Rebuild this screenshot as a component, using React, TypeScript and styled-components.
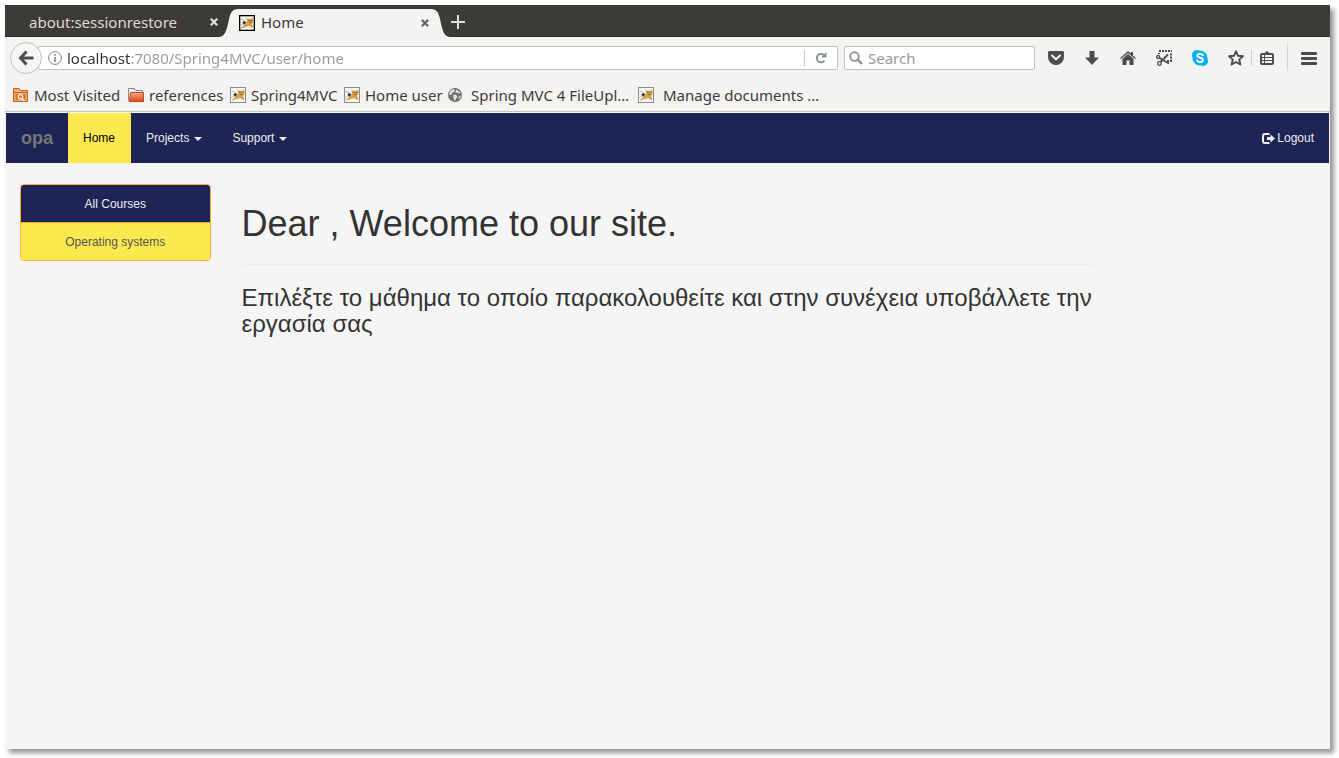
import React from "react";
import styled, { createGlobalStyle, css } from "styled-components";

const chromeFont = `"Noto Sans", "Open Sans", sans-serif`;
const pageFont = `"Liberation Sans", Arial, sans-serif`;

const GlobalStyle = createGlobalStyle`
  *, *::before, *::after { box-sizing: border-box; }
  body { margin: 0; background: #fff; font-family: ${pageFont}; }
  button { border: 0; padding: 0; background: none; font: inherit; color: inherit; cursor: pointer; }
  a { color: inherit; text-decoration: none; }
  svg { display: block; flex: none; }
`;

const Screen = styled.div`
  display: flex;
  height: 100vh;
  padding: 5px 9px 9px 5px;
`;

const BrowserWindow = styled.div`
  flex: 1;
  min-width: 0;
  display: flex;
  flex-direction: column;
  background: #f5f5f5;
  box-shadow: 4px 4px 5px rgba(0, 0, 0, 0.42);
`;

/* Tab strip */
const TabStrip = styled.div`
  display: flex;
  align-items: flex-end;
  height: 32px;
  background: #3c3b37;
  border-bottom: 1px solid #2f2e2a;
  font: 15px/20px ${chromeFont};
`;

const IdleTab = styled.div`
  display: flex;
  align-items: center;
  justify-content: space-between;
  width: 214px;
  height: 28px;
  padding-left: 24px;
  color: #dfdbd2;
`;

const ActiveTab = styled.div`
  display: flex;
  height: 28px;
  margin-bottom: -1px;
  color: #3c3c3c;
`;

const ActiveTabBody = styled.div`
  display: flex;
  align-items: center;
  width: 191px;
  background: #f4f3f1;
`;

const TabTitle = styled.span`
  flex: 1;
  padding: 0 0 2px 6px;
`;

const TabClose = styled.button`
  display: grid;
  place-items: center;
  width: 10px;
  height: 16px;
`;

const NewTab = styled.button`
  display: grid;
  place-items: center;
  width: 16px;
  height: 28px;
`;

/* Navigation toolbar */
const Toolbar = styled.div`
  display: flex;
  align-items: center;
  height: 42px;
  padding-left: 5px;
  background: #f4f3f1;
  font: 15px/20px ${chromeFont};
`;

const BackButton = styled.button`
  display: grid;
  place-items: center;
  flex: none;
  width: 32px;
  height: 32px;
  margin-right: -4px;
  z-index: 1;
  border: 1px solid #c3c1be;
  border-radius: 50%;
  background: #f6f5f4;
`;

const field = css`
  display: flex;
  align-items: center;
  height: 24px;
  border: 1px solid #c3c1be;
  border-radius: 2px;
  background: #fff;
`;

const AddressField = styled.label`
  ${field}
  flex: 1;
  min-width: 0;
  padding-left: 9px;
`;

const SearchField = styled.label`
  ${field}
  width: 191px;
  margin: 0 3px 0 6px;
  padding-left: 4px;
`;

const FieldInput = styled.input`
  flex: 1;
  min-width: 0;
  height: 22px;
  margin-left: 5px;
  padding: 0;
  border: 0;
  outline: 0;
  background: transparent;
  color: #999;
  font: inherit;
  &::placeholder { color: #999; opacity: 1; }
`;

/* The host name is dark, the rest of the address is grey. */
const AddressInput = styled(FieldInput)`
  background: linear-gradient(90deg, #333 64px, #999 64px);
  -webkit-background-clip: text;
  background-clip: text;
  -webkit-text-fill-color: transparent;
`;

const ReloadButton = styled.button`
  display: grid;
  place-items: center;
  width: 33px;
  height: 16px;
  border-left: 1px solid #c8c8c8;
`;

const ToolButton = styled.button<{ $width?: number }>`
  display: grid;
  place-items: center;
  flex: none;
  width: ${(p) => p.$width ?? 36}px;
  height: 32px;
  color: #4c4c4c;
`;

const Separator = styled.span`
  width: 1px;
  height: 16px;
  margin-left: -3px;
  background: #cfcdca;
`;

const TallSeparator = styled.span`
  width: 1px;
  height: 36px;
  margin-left: 5px;
  background: linear-gradient(transparent, #d0cecb 30%, #d0cecb 70%, transparent);
`;

/* Bookmarks */
const BookmarkBar = styled.nav`
  display: flex;
  align-items: center;
  height: 33px;
  padding: 0 8px;
  background: #f4f3f1;
  border-bottom: 1px solid #c4c4bc;
  color: #3c3c3c;
  font: 15px/20px ${chromeFont};
`;

const Bookmark = styled.a<{ $width: number; $gap: number }>`
  display: flex;
  align-items: center;
  flex: none;
  gap: ${(p) => p.$gap}px;
  width: ${(p) => p.$width}px;
  white-space: nowrap;
`;

/* Web page */
const Page = styled.div`
  flex: 1;
  padding: 0 1px;
  border-top: 1px solid #f8f8f6;
  color: #333;
  font: 12px/17px ${pageFont};
`;

const Navbar = styled.nav`
  display: flex;
  height: 50px;
  background: #1e2455;
  color: #eee;
`;

const Brand = styled.a`
  padding: 15px;
  color: #777;
  font-size: 18px;
  font-weight: bold;
  line-height: 20px;
`;

const NavLink = styled.a<{ $active?: boolean }>`
  display: flex;
  align-items: center;
  padding: 0 15px;
  ${(p) => p.$active && css`padding-right: 16px; background: #fce94f; color: #000;`}
`;

const NavToggle = styled.button`
  display: flex;
  align-items: center;
  gap: 5px;
  padding: 0 15px;
`;

const Caret = styled.span`
  margin-top: 2px;
  border: 4px solid transparent;
  border-top-color: #eee;
  border-bottom: 0;
`;

const LogoutLink = styled(NavLink)`
  gap: 2px;
  margin-left: auto;
`;

const Columns = styled.div`
  display: grid;
  grid-template-columns: 2fr 8fr 2fr;
  padding-top: 21px;
`;

const Sidebar = styled.aside`
  padding: 0 16px 0 14px;
`;

const CourseList = styled.div`
  border: 1px solid #ffab3a;
  border-radius: 4px;
  overflow: hidden;
  text-align: center;
`;

const Course = styled.a<{ $selected?: boolean }>`
  display: block;
  padding: 11px 15px 9px;
  background: ${(p) => (p.$selected ? "#1e2455" : "#fce94f")};
  color: ${(p) => (p.$selected ? "#eee" : "#555")};
  & + & { border-top: 1px solid #ffab3a; }
`;

const Main = styled.main`
  padding: 20px 15px 0;
`;

const Title = styled.h1`
  margin: 0 0 20px;
  padding-bottom: 20px;
  border-bottom: 1px solid #eee;
  font-size: 36px;
  font-weight: normal;
  line-height: 40px;
`;

const Lead = styled.h3`
  margin: 0;
  font-size: 24px;
  font-weight: normal;
  line-height: 26px;
`;

const CloseIcon = ({ color }: { color: string }) => (
  <svg width="8" height="8" viewBox="0 0 8 8" stroke={color} strokeWidth="2.2">
    <path d="M0.8 0.8 7.2 7.2M7.2 0.8 0.8 7.2" />
  </svg>
);

const TabCurve = ({ flip = false }: { flip?: boolean }) => (
  <svg width="20" height="28" viewBox="0 0 20 28">
    <path
      transform={flip ? "translate(20 0) scale(-1 1)" : undefined}
      fill="#f4f3f1"
      d="M0 28C6 27.500 7 22 9 15C11 4.500 12 0 20 0V28Z"
    />
  </svg>
);

const TomcatIcon = ({ framed = false }: { framed?: boolean }) => (
  <svg width="16" height="16" viewBox="0 0 16 16">
    <rect x="0.5" y="0.5" width="15" height="15" fill="#f6f6f4" stroke={framed ? "#000" : "#8d8d8d"} strokeWidth={framed ? 1.6 : 1} />
    <path d="M1.500 5C2.500 3.800 4.500 4.500 5.500 6.500M1.500 10.500C3 9 4 8.500 5 8.500" fill="none" stroke="#999" strokeWidth="0.800" />
    <path d="M3.500 7 5.500 6 7.500 7.500 5 10Z" fill="#333" />
    <path d="M7.500 2.800 9 3.800H12.500L14.500 2.500V7L13 9 14.500 12.500 13 13 10.500 11 6.500 12 2 13.800 2.500 12.300 5.500 10 8 7.500Z" fill="#d4a04a" />
    <path d="M9.300 5.500h1.200M12 5.500h1.200M10.500 7.500h1.700" stroke="#5b431a" strokeWidth="0.900" />
  </svg>
);

const VisitedIcon = () => (
  <svg width="16" height="16" viewBox="0 0 16 16">
    <path d="M0.500 14.500V1.500H6L7.500 3.500H14.500V14.500Z" fill="#f0b078" stroke="#c8601a" />
    <path d="M1 5.500H14" stroke="#c8601a" />
    <rect x="2.500" y="7" width="10" height="6" fill="#d9731f" />
    <circle cx="7.500" cy="9.800" r="2.300" fill="#e8853a" stroke="#fff" strokeWidth="1.100" />
    <path d="M9.200 11.500 11.500 14" stroke="#fff" strokeWidth="1.200" />
  </svg>
);

const FolderIcon = () => (
  <svg width="16" height="16" viewBox="0 0 16 16">
    <defs>
      <linearGradient id="folder" x1="0" y1="0" x2="0" y2="1">
        <stop offset="0" stopColor="#f6a983" />
        <stop offset="1" stopColor="#dc4a17" />
      </linearGradient>
    </defs>
    <path d="M0.500 13.500V1.500H6.500L8 3.500H14.500V13.500Z" fill="#eee" stroke="#8a8580" />
    <path d="M1.500 14.500 2.500 5.500H15.500V14.500Z" fill="url(#folder)" stroke="#c9481a" />
  </svg>
);

const GlobeIcon = () => (
  <svg width="16" height="16" viewBox="0 0 16 16">
    <circle cx="8" cy="8" r="7" fill="#6e6e6e" />
    <path d="M3 4 6 2 8 3 7 5 5 6 4.500 8 2 8ZM9 2.500 12 4 13.500 6 12 6.500 10 5.500 8.500 6ZM6 8 8.500 7.500 10.500 9.500 9 12 7.500 14 6.500 11ZM12 9 14 8.500 13 11.500 11.500 12Z" fill="#dedede" />
  </svg>
);

const bookmarks = [
  { text: "Most Visited", icon: <VisitedIcon />, width: 115, gap: 5 },
  { text: "references", icon: <FolderIcon />, width: 102, gap: 5 },
  { text: "Spring4MVC", icon: <TomcatIcon />, width: 114, gap: 5 },
  { text: "Home user", icon: <TomcatIcon />, width: 103, gap: 5 },
  { text: "Spring MVC 4 FileUpl…", icon: <GlobeIcon />, width: 191, gap: 8 },
  { text: "Manage documents …", icon: <TomcatIcon />, width: 180, gap: 9 },
];

export default function App() {
  return (
    <Screen>
      <GlobalStyle />
      <BrowserWindow>
        <TabStrip>
          <IdleTab>
            <span>about:sessionrestore</span>
            <TabClose aria-label="Close tab"><CloseIcon color="#e6e3dc" /></TabClose>
          </IdleTab>
          <ActiveTab>
            <TabCurve />
            <ActiveTabBody>
              <TomcatIcon framed />
              <TabTitle>Home</TabTitle>
              <TabClose aria-label="Close tab"><CloseIcon color="#666" /></TabClose>
            </ActiveTabBody>
            <TabCurve flip />
          </ActiveTab>
          <NewTab aria-label="New tab">
            <svg width="14" height="14" viewBox="0 0 14 14" stroke="#e2dfd8" strokeWidth="2"><path d="M7 0V14M0 7H14" /></svg>
          </NewTab>
        </TabStrip>

        <Toolbar>
          <BackButton aria-label="Back">
            <svg width="16" height="16" viewBox="0 0 16 16" fill="none" stroke="#4c4c4c" strokeWidth="3"><path d="M2.500 8H15.500M8.500 1.500 2.500 8 8.500 14.500" /></svg>
          </BackButton>
          <AddressField>
            <svg width="14" height="14" viewBox="0 0 14 14" fill="none" stroke="#808080"><circle cx="7" cy="7" r="6.400" /><path d="M7 6V11M7 3V4.800" strokeWidth="1.600" /></svg>
            <AddressInput aria-label="Address" defaultValue="localhost:7080/Spring4MVC/user/home" />
            <ReloadButton aria-label="Reload">
              <svg width="12" height="12" viewBox="0 0 12 12"><path d="M9.500 8.500A4.200 4.200 0 1 1 8.800 2.900" fill="none" stroke="#8694a0" strokeWidth="2" /><path d="M11.500 0V5.500H6Z" fill="#8694a0" /></svg>
            </ReloadButton>
          </AddressField>
          <SearchField>
            <svg width="14" height="14" viewBox="0 0 14 14" fill="none" stroke="#8f8f8f"><circle cx="5.500" cy="5.500" r="4.300" strokeWidth="1.800" /><path d="M8.500 8.500 13 13" strokeWidth="2.400" /></svg>
            <FieldInput aria-label="Search" placeholder="Search" />
          </SearchField>
          <ToolButton aria-label="Pocket">
            <svg width="16" height="14" viewBox="0 0 16 14"><path d="M1.500 0H14.500Q16 0 16 1.500V6A8 8 0 0 1 0 6V1.500Q0 0 1.500 0Z" fill="currentColor" /><path d="M4 4.500 8 8.300 12 4.500" fill="none" stroke="#f4f3f1" strokeWidth="2" strokeLinecap="round" /></svg>
          </ToolButton>
          <ToolButton aria-label="Downloads">
            <svg width="14" height="14" viewBox="0 0 14 14" fill="currentColor"><path d="M4.500 0H9.500V6.500H14L7 14 0 6.500H4.500Z" /></svg>
          </ToolButton>
          <ToolButton aria-label="Home page">
            <svg width="16" height="14" viewBox="0 0 16 14" fill="currentColor"><path d="M8 0 11 2.600V1H13V4.400L16 7.200 15 8 8 1.900 1 8 0 7.200Z" /><path d="M8 3 13.500 7.800V14H9.500V9.500H6.500V14H2.500V7.800Z" /></svg>
          </ToolButton>
          <ToolButton aria-label="Clip screenshot">
            <svg width="16" height="16" viewBox="0 0 16 16" fill="none" stroke="currentColor"><path d="M3 1H16" strokeWidth="2" strokeDasharray="2 1" /><path d="M15 3.500V12M3 3V4M11 11H16" strokeWidth="2" strokeDasharray="2 1" /><circle cx="2.200" cy="7" r="1.500" strokeWidth="1.300" /><circle cx="3.500" cy="13.500" r="1.800" strokeWidth="1.300" /><path d="M3.500 8 13 13.500M4.500 12 12 4.500" strokeWidth="1.900" /></svg>
          </ToolButton>
          <ToolButton aria-label="Skype">
            <svg width="16" height="16" viewBox="0 0 16 16"><circle cx="4.800" cy="4.800" r="4.800" fill="#00aff0" /><circle cx="11.200" cy="11.200" r="4.800" fill="#00aff0" /><circle cx="8" cy="8" r="7.500" fill="#00aff0" /><path d="M11 5.300C10.200 3.400 5.300 3.200 5.300 5.800 5.300 8.300 10.900 7.200 10.900 10 10.900 12.700 5.700 12.500 5 10.400" fill="none" stroke="#fff" strokeWidth="1.900" strokeLinecap="round" /></svg>
          </ToolButton>
          <ToolButton aria-label="Bookmark this page">
            <svg width="16" height="16" viewBox="0 0 16 16" fill="none" stroke="currentColor" strokeWidth="1.900" strokeLinejoin="round"><path d="M8 1.300 10 5.800 15 6.300 11.200 9.600 12.400 14.500 8 12 3.600 14.500 4.800 9.600 1 6.300 6 5.800Z" /></svg>
          </ToolButton>
          <Separator />
          <ToolButton $width={30} aria-label="Show bookmarks">
            <svg width="14" height="14" viewBox="0 0 14 14"><path d="M4.500 2 7 0 9.500 2H12Q14 2 14 4V12Q14 14 12 14H2Q0 14 0 12V4Q0 2 2 2Z" fill="currentColor" /><path d="M2 5H4M5 5H12M2 8H4M5 8H12M2 11H4M5 11H12" stroke="#f4f3f1" strokeWidth="2" /></svg>
          </ToolButton>
          <TallSeparator />
          <ToolButton $width={42} aria-label="Open menu">
            <svg width="16" height="13" viewBox="0 0 16 13" fill="currentColor"><rect width="16" height="3" rx="1" /><rect y="5" width="16" height="3" rx="1" /><rect y="10" width="16" height="3" rx="1" /></svg>
          </ToolButton>
        </Toolbar>

        <BookmarkBar aria-label="Bookmarks">
          {bookmarks.map((b) => (
            <Bookmark key={b.text} href="#" $width={b.width} $gap={b.gap}>
              {b.icon}
              <span>{b.text}</span>
            </Bookmark>
          ))}
        </BookmarkBar>

        <Page>
          <Navbar>
            <Brand href="#">opa</Brand>
            <NavLink href="#" $active>Home</NavLink>
            <NavToggle>Projects <Caret /></NavToggle>
            <NavToggle>Support <Caret /></NavToggle>
            <LogoutLink href="#">
              <svg width="13" height="11" viewBox="0 0 13 11"><path d="M7.500 1H3Q1 1 1 3V8Q1 10 3 10H7.500" fill="none" stroke="#eee" strokeWidth="2" /><path d="M5 4H8.500V1.500L13 5.500 8.500 9.500V7H5Z" fill="#eee" /></svg>
              Logout
            </LogoutLink>
          </Navbar>
          <Columns>
            <Sidebar>
              <CourseList>
                <Course href="#" $selected>All Courses</Course>
                <Course href="#">Operating systems</Course>
              </CourseList>
            </Sidebar>
            <Main>
              <Title>Dear , Welcome to our site.</Title>
              <Lead>Επιλέξτε το μάθημα το οποίο παρακολουθείτε και στην συνέχεια υποβάλλετε την εργασία σας</Lead>
            </Main>
          </Columns>
        </Page>
      </BrowserWindow>
    </Screen>
  );
}
